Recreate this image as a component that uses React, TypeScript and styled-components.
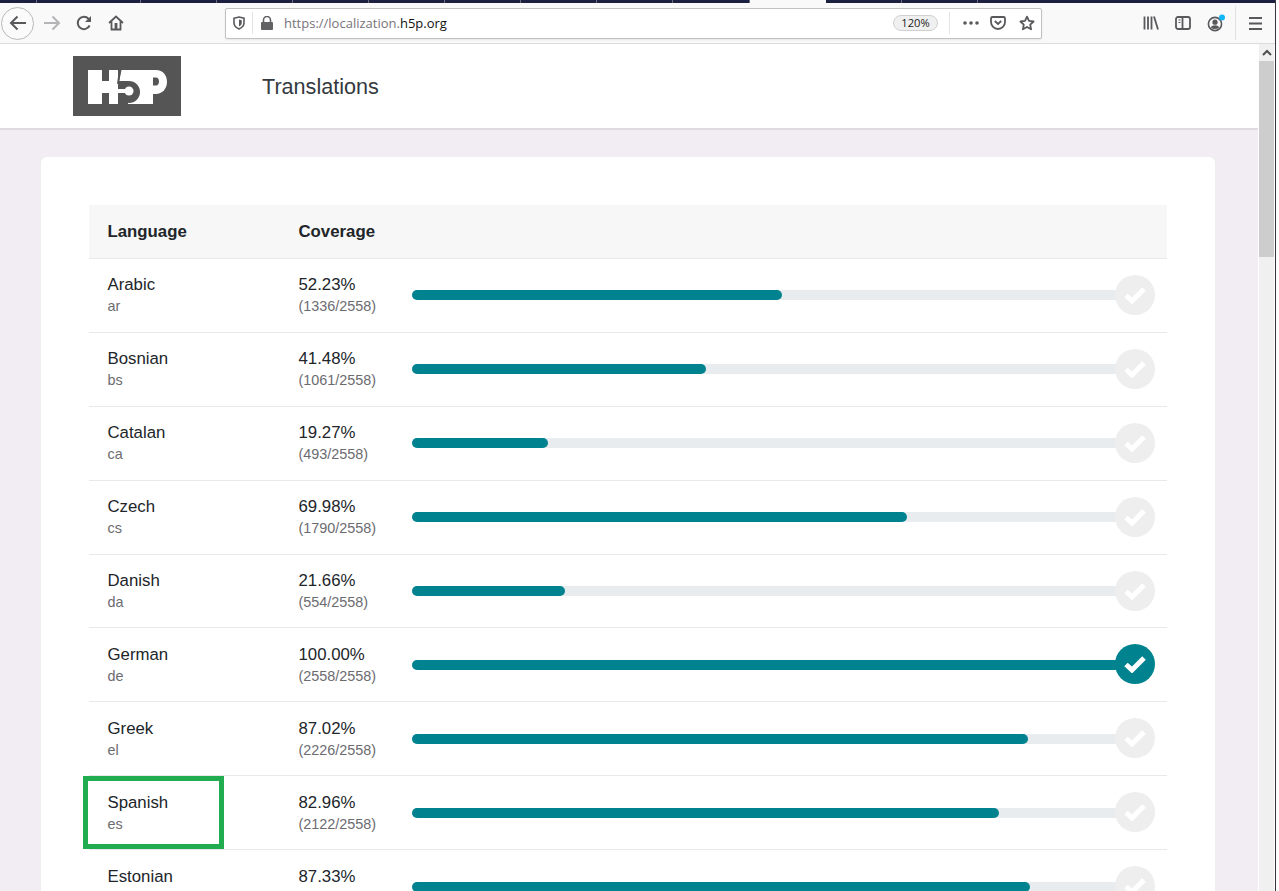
import React from "react";
import styled, { createGlobalStyle } from "styled-components";

const GlobalStyle = createGlobalStyle`
	html, body {
		margin: 0;
		padding: 0;
		background: #fff;
		overflow: hidden;
	}
	body {
		font-family: "Liberation Sans", Arial, sans-serif;
	}
`;

const Screen = styled.div`
	width: 1279px;
	height: 891px;
	overflow: hidden;
	background: #fff;
`;

const BrowserWindow = styled.div`
	width: 1276px;
	height: 891px;
	box-sizing: border-box;
	border-right: 1px solid #3e3440;
	display: flex;
	flex-direction: column;
	overflow: hidden;
`;

const TabStrip = styled.div`
	height: 3px;
	flex: none;
	display: flex;
	background: #1b1f40;
`;

const Tab = styled.div<{ $w: number; $active?: boolean }>`
	width: ${(p) => p.$w}px;
	flex: none;
	box-sizing: border-box;
	background: ${(p) => (p.$active ? "#f9f9fa" : "transparent")};
	border-right: ${(p) => (p.$active ? "none" : "1px solid #6a6c80")};
`;

const Toolbar = styled.div`
	height: 41px;
	flex: none;
	box-sizing: border-box;
	background: #f9f9fa;
	border-bottom: 1px solid #dcdcdc;
	display: flex;
	align-items: center;
	position: relative;
`;

const NavGroup = styled.div`
	width: 225px;
	flex: none;
	display: flex;
	align-items: center;
`;

const BackButton = styled.button`
	width: 33px;
	height: 33px;
	margin-left: 1px;
	padding: 0;
	flex: none;
	display: flex;
	align-items: center;
	justify-content: center;
	border: 1px solid #b9b9bb;
	border-radius: 50%;
	background: #fbfbfb;
`;

const ToolIcon = styled.div<{ $w?: number; $ml?: number }>`
	width: ${(p) => p.$w ?? 18}px;
	height: 18px;
	margin-left: ${(p) => p.$ml ?? 0}px;
	flex: none;
	display: flex;
	align-items: center;
	justify-content: center;
`;

const UrlBar = styled.div`
	width: 817px;
	height: 31px;
	flex: none;
	box-sizing: border-box;
	background: #fff;
	border: 1px solid #c2c2c4;
	border-radius: 2px;
	display: flex;
	align-items: center;
	box-shadow: 0 1px 2px rgba(0, 0, 0, 0.08);
`;

const UrlDivider = styled.div<{ $ml: number }>`
	width: 1px;
	height: 22px;
	margin-left: ${(p) => p.$ml}px;
	flex: none;
	background: #e3e3e4;
`;

const UrlText = styled.div`
	width: 609px;
	margin-left: 10px;
	flex: none;
	font-family: "Open Sans", sans-serif;
	font-size: 13px;
	color: #77737a;
	white-space: nowrap;
	span {
		color: #111;
	}
`;

const ZoomPill = styled.div`
	width: 45px;
	height: 16px;
	flex: none;
	box-sizing: border-box;
	background: #f0f0f1;
	border: 1px solid #d0d0d2;
	border-radius: 8px;
	font-family: "Open Sans", sans-serif;
	font-size: 11.2px;
	line-height: 14px;
	text-align: center;
	color: #222;
`;

const ToolbarDivider = styled.div`
	position: absolute;
	left: 1235px;
	top: 3px;
	width: 1px;
	height: 34px;
	background: #e2e2e3;
`;

const Viewport = styled.div`
	flex: 1;
	min-height: 0;
	display: flex;
`;

const Page = styled.div`
	width: 1258px;
	flex: none;
	background: #f1edf3;
	overflow: hidden;
`;

const Header = styled.header`
	height: 86px;
	box-sizing: border-box;
	background: #fff;
	border-bottom: 2px solid #dddbdd;
	display: flex;
	align-items: center;
	padding-left: 73px;
`;

const Logo = styled.svg`
	width: 108px;
	height: 60px;
	flex: none;
`;

const PageTitle = styled.h1`
	margin: 2px 0 0 81px;
	font-size: 21.6px;
	font-weight: 400;
	color: #343a40;
`;

const Card = styled.main`
	margin: 27px 0 0 41px;
	width: 1174px;
	box-sizing: border-box;
	padding: 48px;
	background: #fff;
	border-radius: 6px;
`;

const TableHead = styled.div`
	height: 54px;
	box-sizing: border-box;
	background: #f7f7f7;
	border-bottom: 1px solid #e9e9ec;
	display: grid;
	grid-template-columns: 191px 1fr;
	align-items: center;
	padding-left: 18.5px;
	font-size: 16.8px;
	font-weight: 700;
	color: #212529;
`;

const Row = styled.div`
	height: 73.9px;
	box-sizing: border-box;
	border-bottom: 1px solid #e9e9ec;
	display: grid;
	grid-template-columns: 191px 113.5px 708px;
	align-items: center;
	padding-left: 18.5px;
`;

const TextCell = styled.div`
	padding-top: 2px;
`;

const LanguageCell = styled(TextCell)<{ $marked?: boolean }>`
	position: relative;
	${(p) =>
		p.$marked &&
		`
		&::after {
			content: "";
			position: absolute;
			left: -24.5px;
			top: -15px;
			width: 131px;
			height: 63px;
			border: 5px solid #22ac50;
		}
	`}
`;

const Name = styled.div`
	font-size: 16.8px;
	line-height: 20px;
	color: #212529;
`;

const Sub = styled.div`
	font-size: 14.4px;
	line-height: 22px;
	color: #6c6c70;
`;

const Track = styled.div`
	position: relative;
	height: 10px;
	border-radius: 5px;
	background: #e9ecef;
`;

const Fill = styled.div`
	height: 100%;
	border-radius: 5px;
	background: #00838f;
`;

const Badge = styled.div<{ $done: boolean }>`
	position: absolute;
	right: -35px;
	top: -15.5px;
	width: 40px;
	height: 40px;
	border-radius: 50%;
	background: ${(p) => (p.$done ? "#00838f" : "#eeeeee")};
	display: flex;
	align-items: center;
	justify-content: center;
`;

const Scrollbar = styled.div`
	width: 15px;
	margin-left: 1px;
	flex: none;
	background: #f0f0f0;
	display: flex;
	flex-direction: column;
`;

const ScrollArrow = styled.div`
	height: 17px;
	flex: none;
	display: flex;
	align-items: center;
	justify-content: center;
`;

const ScrollThumb = styled.div`
	height: 196px;
	flex: none;
	background: #cdcdcd;
`;

const inactiveTabs = [37, 104, 76, 76, 76, 76, 76, 76, 76, 77];
const trailingTabs = [76, 76];

const rows = [
	{ name: "Arabic", code: "ar", pct: "52.23", count: 1336 },
	{ name: "Bosnian", code: "bs", pct: "41.48", count: 1061 },
	{ name: "Catalan", code: "ca", pct: "19.27", count: 493 },
	{ name: "Czech", code: "cs", pct: "69.98", count: 1790 },
	{ name: "Danish", code: "da", pct: "21.66", count: 554 },
	{ name: "German", code: "de", pct: "100.00", count: 2558 },
	{ name: "Greek", code: "el", pct: "87.02", count: 2226 },
	{ name: "Spanish", code: "es", pct: "82.96", count: 2122, marked: true },
	{ name: "Estonian", code: "et", pct: "87.33", count: 2234 },
];

const Check = () => (
	<svg width="24" height="18" viewBox="0 0 24 18">
		<path d="M3 9.5 L9 15 L21 3" fill="none" stroke="#fff" strokeWidth="5" />
	</svg>
);

const Glyph = ({ w = 16, h = 16, children }: { w?: number; h?: number; children: React.ReactNode }) => (
	<svg width={w} height={h} viewBox={`0 0 ${w} ${h}`} fill="none" stroke="#59595c" strokeWidth="2">
		{children}
	</svg>
);

export default function App() {
	return (
		<Screen>
			<GlobalStyle />
			<BrowserWindow>
				<TabStrip>
					{inactiveTabs.map((w, i) => (
						<Tab key={i} $w={w} />
					))}
					<Tab $w={76} $active />
					{trailingTabs.map((w, i) => (
						<Tab key={i} $w={w} />
					))}
				</TabStrip>
				<Toolbar>
					<NavGroup>
						<BackButton>
							<Glyph w={18} h={16}>
								<path d="M17 8H2M8.5 1.5 2 8l6.5 6.5" strokeWidth="2" />
							</Glyph>
						</BackButton>
						<ToolIcon $ml={9}>
							<svg width="18" height="16" viewBox="0 0 18 16" fill="none" stroke="#b5b5b7" strokeWidth="2">
								<path d="M1 8h15M9.5 1.5 16 8l-6.5 6.5" />
							</svg>
						</ToolIcon>
						<ToolIcon $ml={14}>
							<Glyph>
								<path d="M13.6 10.5A6.2 6.2 0 1 1 12.6 3.8L14.5 5.5" />
								<path d="M15 1v6H9" fill="#59595c" stroke="none" />
							</Glyph>
						</ToolIcon>
						<ToolIcon $ml={14}>
							<Glyph>
								<path d="M1 8 8 1.5 15 8M3.5 6.5V14.5H12.5V6.5" strokeWidth="1.8" />
								<rect x="6.6" y="8" width="2.8" height="6" fill="#59595c" stroke="none" />
							</Glyph>
						</ToolIcon>
					</NavGroup>
					<UrlBar>
						<ToolIcon $w={16} $ml={5}>
							<svg width="12" height="14" viewBox="0 0 12 14" fill="none" stroke="#59595c" strokeWidth="1.6">
								<path d="M1 2.2 6 1l5 1.2v4.6c0 3-2.2 5-5 6.2-2.8-1.2-5-3.2-5-6.2z" />
								<path d="M6 3.5 8.8 4.2v2.6c0 1.7-1.2 2.8-2.8 3.6z" fill="#59595c" stroke="none" />
							</svg>
						</ToolIcon>
						<UrlDivider $ml={5} />
						<ToolIcon $w={14} $ml={7}>
							<svg width="12" height="14" viewBox="0 0 12 14" fill="#626265">
								<rect x="0" y="6" width="12" height="8" rx="1" />
								<path d="M2.5 6.5V4a3.5 3.5 0 0 1 7 0v2.5" fill="none" stroke="#626265" strokeWidth="1.6" />
							</svg>
						</ToolIcon>
						<UrlText>
							https://localization.<span>h5p.org</span>
						</UrlText>
						<ZoomPill>120%</ZoomPill>
						<UrlDivider $ml={11} />
						<ToolIcon $ml={12}>
							<svg width="16" height="4" viewBox="0 0 16 4" fill="#59595c">
								<circle cx="2" cy="2" r="1.8" />
								<circle cx="8" cy="2" r="1.8" />
								<circle cx="14" cy="2" r="1.8" />
							</svg>
						</ToolIcon>
						<ToolIcon $ml={9}>
							<Glyph>
								<path d="M2.5 2h11A1.5 1.5 0 0 1 15 3.5V7A7 7 0 0 1 1 7V3.5A1.5 1.5 0 0 1 2.5 2z" strokeWidth="1.8" />
								<path d="M4.8 6 8 9l3.2-3" strokeWidth="1.8" />
							</Glyph>
						</ToolIcon>
						<ToolIcon $ml={11}>
							<Glyph>
								<path d="M8 1.6 10 5.9l4.6.6-3.4 3.2.9 4.6L8 12l-4.1 2.3.9-4.6L1.4 6.5 6 5.9z" strokeWidth="1.8" strokeLinejoin="round" />
							</Glyph>
						</ToolIcon>
					</UrlBar>
					<ToolIcon $ml={100}>
						<Glyph>
							<path d="M1.5 1.5v13M5 1.5v13M8.5 1.5v13M11 1.5l4 13" strokeWidth="1.8" />
						</Glyph>
					</ToolIcon>
					<ToolIcon $ml={14}>
						<Glyph>
							<rect x="1" y="2" width="14" height="12" rx="2" strokeWidth="1.8" />
							<path d="M7.5 2v12" strokeWidth="1.8" />
							<path d="M3.5 5h2M3.5 7.5h2" strokeWidth="1.2" />
						</Glyph>
					</ToolIcon>
					<ToolIcon $ml={15}>
						<svg width="18" height="18" viewBox="0 0 18 18" fill="none">
							<circle cx="8" cy="10" r="6.6" stroke="#59595c" strokeWidth="1.6" />
							<circle cx="8" cy="8.2" r="2.6" fill="#59595c" />
							<path d="M3.6 13.2a5 3.6 0 0 1 8.8 0 6 6 0 0 1-8.8 0z" fill="#59595c" />
							<circle cx="15" cy="3.5" r="3" fill="#12b5f5" />
						</svg>
					</ToolIcon>
					<ToolbarDivider />
					<ToolIcon $ml={22}>
						<svg width="14" height="13" viewBox="0 0 14 13" fill="#59595c">
							<rect x="0" y="0" width="13" height="2" />
							<rect x="0" y="5.5" width="13" height="2" />
							<rect x="0" y="11" width="13" height="2" />
						</svg>
					</ToolIcon>
				</Toolbar>
				<Viewport>
					<Page>
						<Header>
							<Logo viewBox="0 0 108 60">
								<rect width="108" height="60" fill="#555" />
								<g fill="#fff">
									<rect x="15" y="14" width="14" height="34" />
									<rect x="29" y="25" width="8" height="12" />
									<rect x="36" y="14" width="9" height="34" />
									<path d="M48.5 14H83C90 14 94 19 94 26C94 33 89 38 83 38H80V48H55V25H46Z" />
								</g>
								<path fill="#555" d="M80 21.5H83C85 21.5 86 23.5 86 25.5C86 27.5 85 29.5 83 29.5H80Z" />
								<circle cx="56" cy="36" r="11" fill="#555" />
								<path d="M47 14 45 28" stroke="#555" strokeWidth="2" />
								<rect x="44" y="33" width="10" height="4" fill="#fff" />
								<circle cx="56" cy="35" r="4.5" fill="#fff" />
							</Logo>
							<PageTitle>Translations</PageTitle>
						</Header>
						<Card>
							<TableHead>
								<div>Language</div>
								<div>Coverage</div>
							</TableHead>
							{rows.map((r) => (
								<Row key={r.code}>
									<LanguageCell $marked={r.marked}>
										<Name>{r.name}</Name>
										<Sub>{r.code}</Sub>
									</LanguageCell>
									<TextCell>
										<Name>{r.pct}%</Name>
										<Sub>
											({r.count}/2558)
										</Sub>
									</TextCell>
									<Track>
										<Fill style={{ width: `${r.pct}%` }} />
										<Badge $done={r.count === 2558}>
											<Check />
										</Badge>
									</Track>
								</Row>
							))}
						</Card>
					</Page>
					<Scrollbar>
						<ScrollArrow>
							<svg width="10" height="7" viewBox="0 0 10 7" fill="none" stroke="#505050" strokeWidth="2">
								<path d="M1 6 5 2l4 4" />
							</svg>
						</ScrollArrow>
						<ScrollThumb />
					</Scrollbar>
				</Viewport>
			</BrowserWindow>
		</Screen>
	);
}
